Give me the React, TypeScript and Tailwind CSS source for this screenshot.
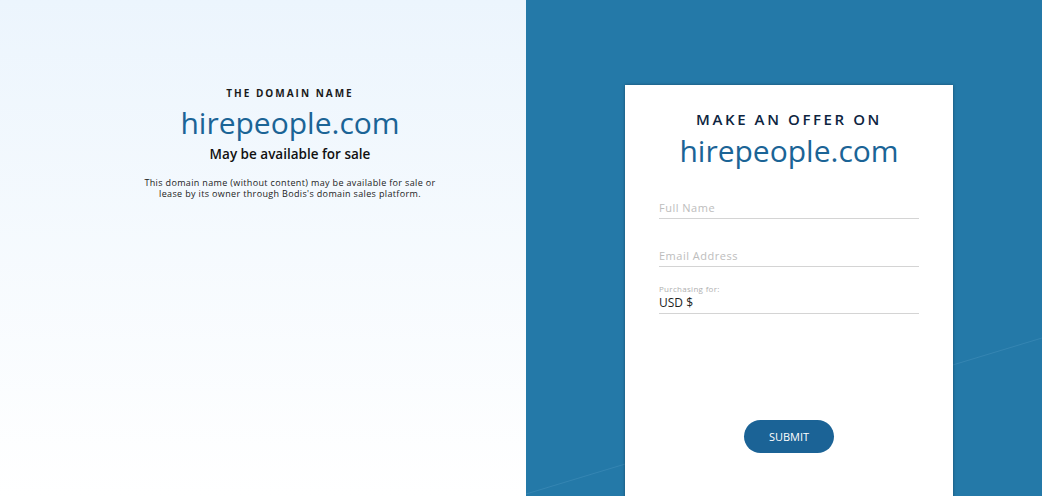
import React from "react";

export default function App() {
  return (
    <div
      className="flex w-[1042px] h-[496px] overflow-hidden"
      style={{ fontFamily: '"Open Sans", "Noto Sans", sans-serif' }}
    >
      <div className="w-[526px] h-full bg-gradient-to-b from-[#ecf5fd] to-[#ffffff] pl-[54px] pt-[87px]">
        <div className="flex flex-col items-center text-center">
          <div className="text-[10px] font-bold tracking-[2px] text-[#1a1a1a] leading-[12px]">THE DOMAIN NAME</div>
          <div className="text-[30px] font-medium text-[#1b6496] leading-[40px] mt-[4px]">hirepeople.com</div>
          <div className="text-[13.5px] font-semibold text-[#111] leading-[18px] mt-[2px]">May be available for sale</div>
          <div className="text-[9px] tracking-[0.35px] text-[#222] leading-[11px] mt-[14px] w-[292px]">
            This domain name (without content) may be available for sale or lease by its owner through Bodis's domain sales platform.
          </div>
        </div>
      </div>
      <div className="relative flex-1 h-full bg-[#2479a8] pl-[99px] pt-[85px]">
        <svg className="absolute inset-0" width="516" height="496">
          <line x1="0" y1="494" x2="516" y2="338" stroke="#3585b2" strokeWidth="1" />
        </svg>
        <div className="relative w-[328px] h-[420px] bg-white shadow-[0_0_3px_rgba(0,0,0,0.35)] flex flex-col items-center pt-[24px]">
          <div className="text-[15px] font-semibold tracking-[2.6px] text-[#0d2440] leading-[20px]">MAKE AN OFFER ON</div>
          <div className="text-[30px] font-medium text-[#1b6496] leading-[40px] mt-[2px]">hirepeople.com</div>
          <div className="w-[260px] mt-[30px]">
            <div className="border-b border-[#d4d4d4] pb-[3px] text-[11px] tracking-[0.5px] text-[#bdbdbd] leading-[14px]">Full Name</div>
            <div className="border-b border-[#d4d4d4] pb-[3px] mt-[30px] text-[11px] tracking-[0.5px] text-[#bdbdbd] leading-[14px]">Email Address</div>
            <div className="border-b border-[#d4d4d4] pb-[3px] mt-[17px]">
              <div className="text-[8px] tracking-[0.3px] text-[#b0b0b0] leading-[10px]">Purchasing for:</div>
              <div className="text-[12px] text-[#222] leading-[15px] mt-[1px]">USD $</div>
            </div>
          </div>
          <button className="mt-[106px] w-[90px] h-[33px] rounded-full bg-[#1b6396] text-white text-[11px] leading-[14px]">SUBMIT</button>
        </div>
      </div>
    </div>
  );
}
